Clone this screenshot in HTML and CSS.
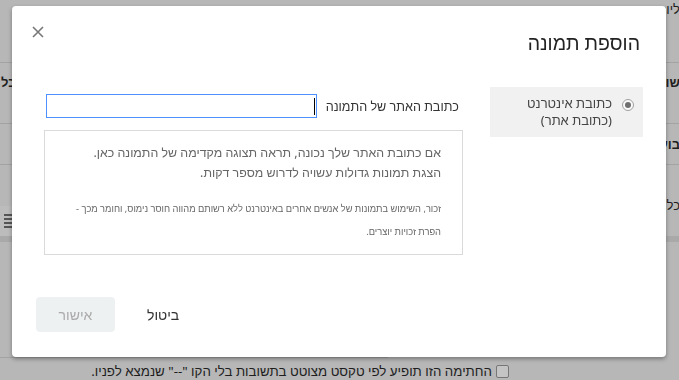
FILE: index.html
```html
<!DOCTYPE html>
<html lang="he" dir="rtl">
<head>
    <meta charset="UTF-8">
    <meta name="viewport" content="width=device-width, initial-scale=1.0">
    <title>הוספת תמונה</title>
    <link rel="stylesheet" href="styles.css">
</head>
<body>

<div class="page">
    <div class="row row-top">
        <span class="lbl">ליו:</span>
    </div>
    <div class="row row-a">
        <span class="lbl bold">שורה</span>
        <span class="val bold">כל</span>
    </div>
    <div class="row row-b">
        <span class="lbl bold">בועה</span>
    </div>
    <div class="row row-c">
        <span class="lbl">כל</span>
        <div class="toolbar">
            <div class="tb-icon"><i></i><i></i><i></i><i></i></div>
        </div>
    </div>
    <div class="row row-d"></div>
    <div class="row row-e">
        <span class="check"></span>
        <span class="note">החתימה הזו תופיע לפי טקסט מצוטט בתשובות בלי הקו "--" שנמצא לפניו.</span>
    </div>
</div>

<div class="modal">
    <div class="modal-head">
        <h2 class="title">הוספת תמונה</h2>
        <svg class="close" width="12" height="12" viewBox="0 0 12 12">
            <path d="M1 1 L11 11 M11 1 L1 11" stroke="#777" stroke-width="1.6" fill="none"/>
        </svg>
    </div>

    <div class="modal-body">
        <div class="sources">
            <div class="source">
                <span class="radio"><span></span></span>
                <span class="source-text">כתובת אינטרנט<br>(כתובת אתר)</span>
            </div>
        </div>

        <div class="main">
            <div class="url-row">
                <label class="url-label">כתובת האתר של התמונה</label>
                <div class="url-input"><span class="caret"></span></div>
            </div>
            <div class="preview">
                <p class="hint">אם כתובת האתר שלך נכונה, תראה תצוגה מקדימה של התמונה כאן.<br>הצגת תמונות גדולות עשויה לדרוש מספר דקות.</p>
                <p class="small">זכור, השימוש בתמונות של אנשים אחרים באינטרנט ללא רשותם מהווה חוסר נימוס, וחומר מכך -<br>הפרת זכויות יוצרים.</p>
            </div>
        </div>
    </div>

    <div class="modal-foot">
        <button class="btn cancel">ביטול</button>
        <button class="btn ok" disabled>אישור</button>
    </div>
</div>

</body>
</html>
```

FILE: styles.css
```css
body {
    font-family: "Noto Sans", sans-serif;
    margin: 0;
    padding: 0;
    background-color: #b7b7b7;
    color: #1e1e1e;
    overflow: hidden;
}
.page {
    width: 679px;
    height: 380px;
}
.row {
    display: flex;
    justify-content: space-between;
    align-items: flex-start;
    border-bottom: 1px solid #a3a3a3;
    font-size: 13px;
}
.lbl {
    margin-right: -1px;
}
.bold {
    font-weight: bold;
}
.row-top {
    height: 62px;
}
.row-a {
    height: 61px;
    padding-top: 10px;
    box-sizing: border-box;
}
.row-a .val {
    margin-left: 1px;
}
.row-b {
    height: 41px;
    padding-top: 11px;
    box-sizing: border-box;
}
.row-c {
    height: 77px;
    padding-top: 31px;
    box-sizing: border-box;
    border-bottom: 6px solid #a9a9a9;
}
.toolbar {
    width: 30px;
    height: 30px;
    margin-top: 10px;
    background-color: #bcbcbc;
    display: flex;
    align-items: center;
    justify-content: flex-end;
}
.tb-icon {
    display: flex;
    flex-direction: column;
    gap: 2px;
    margin-left: 4px;
}
.tb-icon i {
    display: block;
    width: 9px;
    height: 2px;
    background-color: #555;
}
.row-d {
    height: 115px;
    width: 388px;
    margin-right: auto;
}
.row-e {
    border-bottom: none;
    justify-content: flex-start;
    align-items: center;
    padding-right: 170px;
    padding-top: 5px;
    font-size: 13.3px;
    line-height: 16px;
    gap: 4px;
}
.check {
    width: 11px;
    height: 11px;
    border: 1px solid #777;
    border-radius: 2px;
    background-color: #c4c4c4;
}

/* dialog */
.modal {
    position: fixed;
    left: 12px;
    top: 6px;
    width: 654px;
    height: 351px;
    background-color: #fff;
    border-radius: 4px;
    box-shadow: 0 2px 4px rgba(0, 0, 0, 0.35);
    display: flex;
    flex-direction: column;
    color: #222;
}
.modal-head {
    display: flex;
    justify-content: space-between;
    align-items: flex-start;
    padding: 22px 26px 0 20px;
}
.title {
    margin: 0;
    font-size: 19.5px;
    font-weight: normal;
    line-height: 30px;
    color: #222;
}
.close {
    margin-top: -2px;
}
.modal-body {
    display: flex;
    gap: 27px;
    margin-top: 29px;
    padding: 0 23px 0 0;
}
.sources {
    width: 153px;
    flex-shrink: 0;
}
.source {
    display: flex;
    align-items: flex-start;
    gap: 10px;
    background-color: #f1f1f1;
    height: 50px;
    box-sizing: border-box;
    padding: 8px 9px 0 0;
    font-size: 13px;
    line-height: 17px;
    color: #444;
}
.radio {
    width: 10px;
    height: 10px;
    margin-top: 4px;
    border: 1px solid #a0a0a0;
    border-radius: 50%;
    background-color: #fafafa;
    display: flex;
    align-items: center;
    justify-content: center;
}
.radio span {
    width: 6px;
    height: 6px;
    border-radius: 50%;
    background-color: #6f6f6f;
}
.main {
    width: 419px;
    flex-shrink: 0;
}
.url-row {
    display: flex;
    align-items: center;
    gap: 9px;
    margin-top: 7px;
    padding-right: 4px;
}
.url-label {
    flex-shrink: 0;
    white-space: nowrap;
    font-size: 12.6px;
    color: #333;
}
.url-input {
    width: 269px;
    height: 22px;
    border: 1px solid #4d90fe;
    display: flex;
    align-items: center;
}
.caret {
    width: 1px;
    height: 17px;
    margin-right: 1px;
    background-color: #000;
}
.preview {
    margin-top: 12px;
    height: 125px;
    box-sizing: border-box;
    border: 1px solid #dadada;
    padding: 12px 21px 0 10px;
    color: #666;
}
.hint {
    margin: 0;
    font-size: 12.4px;
    line-height: 20px;
}
.small {
    margin: 14px 0 0;
    font-size: 9.3px;
    line-height: 23px;
    white-space: nowrap;
}
.modal-foot {
    margin-top: auto;
    display: flex;
    justify-content: flex-end;
    padding: 0 0 25px 24px;
}
.btn {
    font-family: "Noto Sans", sans-serif;
    font-size: 14px;
    height: 35px;
    border: none;
    border-radius: 4px;
    background: none;
}
.cancel {
    padding: 0 18px 0 32px;
    color: #333;
}
.ok {
    width: 79px;
    background-color: #eef1f2;
    color: #aaa;
}
```
